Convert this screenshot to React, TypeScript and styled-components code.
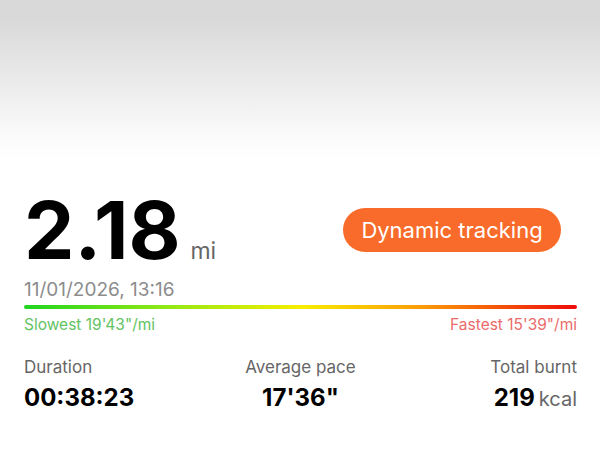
import React from "react";
import styled, { createGlobalStyle } from "styled-components";

const Global = createGlobalStyle`
  html, body { margin: 0; padding: 0; background: #ffffff; }
  body { font-family: Inter, "Noto Sans", sans-serif; width: 600px; height: 450px; overflow: hidden; }
`;

const Page = styled.div`
  width: 600px;
  height: 450px;
  background: #ffffff;
  display: flex;
  flex-direction: column;
`;

const HeaderFade = styled.div`
  height: 160px;
  flex: none;
  background: linear-gradient(to bottom, #d9d9d9 0%, #d9d9d9 12%, #ececec 55%, #fbfbfb 85%, #ffffff 100%);
`;

const Content = styled.div`
  padding: 30px 24px 0 24px;
  display: flex;
  flex-direction: column;
`;

const TopRow = styled.div`
  display: flex;
  align-items: center;
  justify-content: space-between;
`;

const Distance = styled.div`
  display: flex;
  align-items: baseline;
  gap: 10px;
`;

const BigNumber = styled.span`
  font-size: 80px;
  line-height: 80px;
  font-weight: 700;
  color: #000;
`;

const Unit = styled.span<{ $size: number }>`
  font-size: ${(p) => p.$size}px;
  font-weight: 400;
  color: #666;
`;

const TrackButton = styled.button`
  width: 218px;
  height: 44px;
  margin-right: 15px;
  border: none;
  border-radius: 22px;
  background: #f96b2a;
  color: #fff;
  font-family: Inter, sans-serif;
  font-size: 22px;
  font-weight: 400;
  padding: 0;
  display: flex;
  align-items: center;
  justify-content: center;
`;

const DateText = styled.div`
  margin-top: 8px;
  font-size: 19px;
  line-height: 24px;
  color: #8c8c8c;
`;

const PaceBar = styled.div`
  margin-top: 3px;
  height: 4px;
  border-radius: 2px;
  width: 553px;
  background: linear-gradient(to right, #1fd51f 0%, #8ee815 25%, #f7ee00 50%, #fb9b08 72%, #ee0a0a 100%);
`;

const PaceLabels = styled.div`
  display: flex;
  justify-content: space-between;
  width: 553px;
  margin-top: 6px;
  font-size: 15.5px;
  line-height: 20px;
`;

const PaceLabel = styled.span<{ $color: string }>`
  color: ${(p) => p.$color};
`;

const Stats = styled.div`
  margin-top: 21px;
  width: 553px;
  display: grid;
  grid-template-columns: 1fr 1fr 1fr;
`;

const Stat = styled.div<{ $align: "flex-start" | "center" | "flex-end" }>`
  display: flex;
  flex-direction: column;
  align-items: ${(p) => p.$align};
`;

const StatLabel = styled.div`
  font-size: 17px;
  line-height: 22px;
  color: #666;
`;

const StatValue = styled.div`
  margin-top: 5px;
  display: flex;
  align-items: baseline;
  gap: 4px;
  font-size: 24px;
  line-height: 30px;
  font-weight: 700;
  color: #000;
`;

export default function App() {
  return (
    <Page>
      <Global />
      <HeaderFade />
      <Content>
        <TopRow>
          <Distance>
            <BigNumber>2.18</BigNumber>
            <Unit $size={23}>mi</Unit>
          </Distance>
          <TrackButton>Dynamic tracking</TrackButton>
        </TopRow>
        <DateText>11/01/2026, 13:16</DateText>
        <PaceBar />
        <PaceLabels>
          <PaceLabel $color="#63c363">Slowest 19'43"/mi</PaceLabel>
          <PaceLabel $color="#eb6b6b">Fastest 15'39"/mi</PaceLabel>
        </PaceLabels>
        <Stats>
          <Stat $align="flex-start">
            <StatLabel>Duration</StatLabel>
            <StatValue>00:38:23</StatValue>
          </Stat>
          <Stat $align="center">
            <StatLabel>Average pace</StatLabel>
            <StatValue>17'36"</StatValue>
          </Stat>
          <Stat $align="flex-end">
            <StatLabel>Total burnt</StatLabel>
            <StatValue>
              219<Unit $size={20}>kcal</Unit>
            </StatValue>
          </Stat>
        </Stats>
      </Content>
    </Page>
  );
}
